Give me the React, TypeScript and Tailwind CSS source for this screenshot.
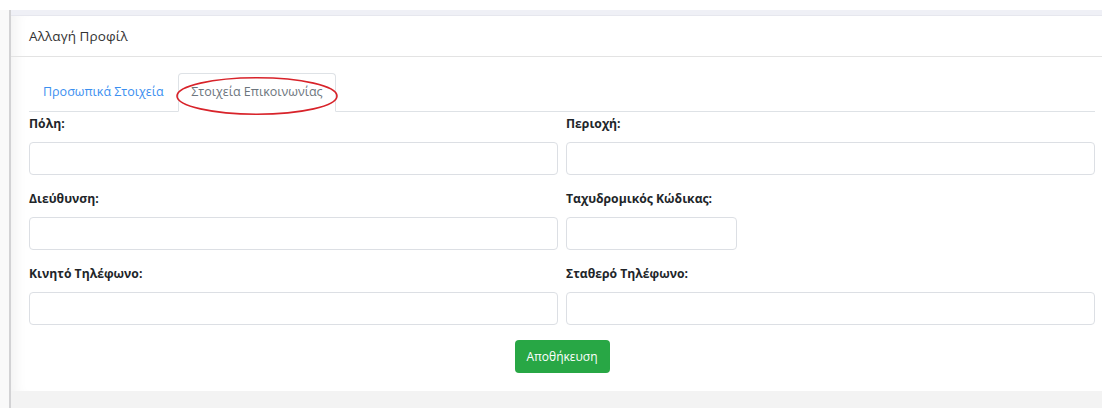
import React from "react";

const fieldLabel = "block text-[12.2px] font-bold text-[#212529] leading-[18px] mb-[9px]";
const fieldInput =
  "block h-[33px] rounded-[4px] border border-[#dcdfe4] bg-white outline-none";

function Field({ label, short }: { label: string; short?: boolean }) {
  return (
    <div>
      <label className={fieldLabel}>{label}</label>
      <input type="text" className={`${fieldInput} ${short ? "w-[171px]" : "w-full"}`} />
    </div>
  );
}

export default function App() {
  return (
    <div
      className="w-[1102px] h-[408px] overflow-hidden bg-white flex flex-col"
      style={{ fontFamily: '"Open Sans", "Noto Sans", sans-serif' }}
    >
      <div className="h-[10px] shrink-0" />
      <div className="flex flex-1 min-h-0">
        <div className="w-[9px] bg-[#f9f9f9] shrink-0" />
        <div className="flex-1 border-l-2 border-[#d2d2d4] bg-[#f3f3f3] flex flex-col min-w-0">
          <div className="h-[6px] bg-[#eff0f6] border-b border-[#e6e7ee] shrink-0" />
          <div className="w-[1102px] bg-white shadow-[inset_14px_0_14px_-10px_rgba(0,0,0,0.06)]">
            <div className="h-[41px] border-b border-[#e3e3e3] px-[18px] flex items-center">
              <span className="text-[13.5px] text-[#333] tracking-[0.1px]">Αλλαγή Προφίλ</span>
            </div>
            <div className="px-[18px] pt-[16px] pb-[18px]">
              <div className="relative flex border-b border-[#dee2e6] h-[39px]">
                <button className="px-[14px] h-[38px] text-[12.5px] text-[#3b8ff0]">
                  Προσωπικά Στοιχεία
                </button>
                <button className="px-[12.5px] h-[39px] -mb-px bg-white border border-[#dee2e6] border-b-white rounded-t-[4px] text-[12.5px] text-[#6c757d]">
                  Στοιχεία Επικοινωνίας
                </button>
                <svg
                  className="absolute left-[146px] top-[3px] pointer-events-none"
                  width="166"
                  height="41"
                  viewBox="0 0 166 41"
                >
                  <ellipse cx="82" cy="20" rx="80" ry="18.2" fill="none" stroke="#d8232a" strokeWidth="1.6" />
                </svg>
              </div>
              <div className="grid grid-cols-2 gap-x-[8px] gap-y-[15px] pt-[3px]">
                <Field label="Πόλη:" />
                <Field label="Περιοχή:" />
                <Field label="Διεύθυνση:" />
                <Field label="Ταχυδρομικός Κώδικας:" short />
                <Field label="Κινητό Τηλέφωνο:" />
                <Field label="Σταθερό Τηλέφωνο:" />
              </div>
              <div className="flex justify-center mt-[15px]">
                <button className="h-[33px] w-[95px] rounded-[4px] bg-[#28a745] text-white text-[12px]">
                  Αποθήκευση
                </button>
              </div>
            </div>
          </div>
        </div>
      </div>
    </div>
  );
}
